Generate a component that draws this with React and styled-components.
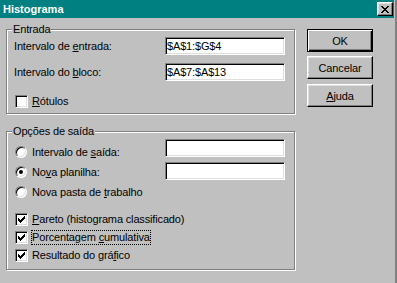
import React from 'react';
import styled, { createGlobalStyle, css } from 'styled-components';

const Global = createGlobalStyle`
  html, body { margin: 0; padding: 0; background: #c0c0c0; }
  * { box-sizing: border-box; }
  body {
    font-family: "Liberation Sans", Arial, sans-serif;
    font-size: 11px;
    letter-spacing: -0.15px;
    color: #000;
  }
`;

const Window = styled.div`
  width: 397px;
  height: 283px;
  background: #c0c0c0;
  border-right: 2px solid #808080;
  padding-right: 1px;
  display: flex;
  flex-direction: column;
  overflow: hidden;
`;

const TitleBar = styled.div`
  height: 18px;
  background: #008080;
  color: #fff;
  font-weight: bold;
  letter-spacing: 0;
  display: flex;
  align-items: center;
  justify-content: space-between;
  padding: 0 1px 0 3px;
  flex-shrink: 0;
`;

const CloseBtn = styled.div`
  width: 16px;
  height: 14px;
  background: #c0c0c0;
  border: 1px solid;
  border-color: #fff #000 #000 #fff;
  box-shadow: inset -1px -1px #808080, inset 1px 1px #dfdfdf;
  display: flex;
  align-items: center;
  justify-content: center;
`;

const Body = styled.div`
  display: flex;
  align-items: flex-start;
  padding: 11px 0 0 6px;
`;

const LeftCol = styled.div`
  width: 289px;
  display: flex;
  flex-direction: column;
  gap: 17px;
`;

const Group = styled.div`
  position: relative;
  border: 1px solid #808080;
  box-shadow: inset 1px 1px #fff, 1px 1px #fff;
  padding: ${p => p.$pad};
  display: flex;
  flex-direction: column;
`;

const Legend = styled.span`
  position: absolute;
  top: -7px;
  left: 5px;
  padding: 0 1px;
  line-height: 13px;
  background: #c0c0c0;
`;

const Row = styled.div`
  height: ${p => p.$h}px;
  margin-top: ${p => p.$mt || 0}px;
  display: flex;
  align-items: center;
  padding-left: ${p => p.$pl || 0}px;
`;

const Label = styled.span`
  flex: 1;
  line-height: 13px;
  white-space: nowrap;
`;

const Field = styled.input`
  width: 120px;
  height: 18px;
  background: #fff;
  border: 1px solid;
  border-color: #808080 #fff #fff #808080;
  box-shadow: inset 1px 1px #000, inset -1px -1px #dfdfdf;
  padding: 0 1px;
  margin: 0;
  font: inherit;
  letter-spacing: inherit;
  color: #000;
  outline: none;
  ${p => p.$top !== undefined && css`
    align-self: flex-start;
    margin-top: ${p.$top}px;
  `}
`;

const Box = styled.span`
  width: 13px;
  height: 13px;
  flex-shrink: 0;
  background: #fff;
  border: 1px solid;
  border-color: #808080 #fff #fff #808080;
  box-shadow: inset 1px 1px #000, inset -1px -1px #dfdfdf;
  display: flex;
  align-items: center;
  justify-content: center;
  margin-right: 4px;
`;

const Radio = styled.span`
  width: 12px;
  height: 12px;
  flex-shrink: 0;
  border-radius: 50%;
  background: #fff;
  border: 1px solid;
  border-color: #808080 #fff #fff #808080;
  box-shadow: inset 1px 1px #000, inset -1px -1px #dfdfdf;
  margin: 0 5px 0 1px;
  display: flex;
  align-items: center;
  justify-content: center;
  &::after {
    content: '';
    width: 4px;
    height: 4px;
    border-radius: 50%;
    background: ${p => (p.$on ? '#000' : 'transparent')};
  }
`;

const Text = styled.span`
  line-height: 13px;
  white-space: nowrap;
  ${p => p.$focus && css`
    outline: 1px dotted #000;
    outline-offset: 0;
  `}
`;

const U = styled.u`
  text-decoration: underline;
  text-underline-offset: 1px;
`;

const ButtonCol = styled.div`
  margin-left: 12px;
  display: flex;
  flex-direction: column;
`;

const Button = styled.button`
  width: 66px;
  height: 23px;
  margin: ${p => p.$mt || 0}px 0 0 0;
  padding: 0;
  font: inherit;
  letter-spacing: inherit;
  color: #000;
  background: #c0c0c0;
  border: 1px solid;
  border-color: #fff #000 #000 #fff;
  box-shadow: inset -1px -1px #808080, inset 1px 1px #dfdfdf;
  ${p => p.$default && css`
    border: 1px solid #000;
    box-shadow: inset 1px 1px #fff, inset -1px -1px #000, inset -2px -2px #808080;
  `}
`;

const PixelGlyph = ({ rows, w, h }) => (
  <svg width={w} height={h} viewBox={`0 0 ${w} ${h}`} shapeRendering="crispEdges">
    {rows.flatMap((r, y) =>
      r.split('').map((c, x) =>
        c === '1' ? <rect key={`${x}-${y}`} x={x} y={y} width="1" height="1" fill="#000" /> : null
      )
    )}
  </svg>
);

const CLOSE = [
  '11....11',
  '.11..11.',
  '..1111..',
  '...11...',
  '..1111..',
  '.11..11.',
  '11....11',
];

const CHECK = [
  '......1',
  '.....11',
  '1...111',
  '11.111.',
  '11111..',
  '.111...',
  '..1....',
];

const CheckRow = ({ checked, children, focus, mt }) => (
  <Row $h={18} $pl={1} $mt={mt}>
    <Box>{checked && <PixelGlyph rows={CHECK} w={7} h={7} />}</Box>
    <Text $focus={focus}>{children}</Text>
  </Row>
);

const RadioRow = ({ on, children, fieldTop }) => (
  <Row $h={20}>
    <Radio $on={on} />
    <Label>{children}</Label>
    {fieldTop !== undefined && <Field readOnly value="" $top={fieldTop} />}
  </Row>
);

export default function App() {
  return (
    <>
      <Global />
      <Window>
        <TitleBar>
          <span>Histograma</span>
          <CloseBtn><PixelGlyph rows={CLOSE} w={8} h={7} /></CloseBtn>
        </TitleBar>
        <Body>
          <LeftCol>
            <Group $pad="7px 9px 3px 7px">
              <Legend>Entrada</Legend>
              <Row $h={18}>
                <Label>Intervalo de <U>e</U>ntrada:</Label>
                <Field readOnly value="$A$1:$G$4" />
              </Row>
              <Row $h={18} $mt={8}>
                <Label>Intervalo do <U>b</U>loco:</Label>
                <Field readOnly value="$A$7:$A$13" />
              </Row>
              <CheckRow mt={11}><U>R</U>ótulos</CheckRow>
            </Group>
            <Group $pad="10px 9px 5px 7px">
              <Legend>Opções de saída</Legend>
              <RadioRow fieldTop={-3}>Intervalo de <U>s</U>aída:</RadioRow>
              <RadioRow on fieldTop={0}>No<U>v</U>a planilha:</RadioRow>
              <RadioRow>Nova pasta de <U>t</U>rabalho</RadioRow>
              <CheckRow checked mt={8}><U>P</U>areto (histograma classificado)</CheckRow>
              <CheckRow checked focus>Porcentagem <U>c</U>umulativa</CheckRow>
              <CheckRow checked>Resultado do grá<U>f</U>ico</CheckRow>
            </Group>
          </LeftCol>
          <ButtonCol>
            <Button $default>OK</Button>
            <Button $mt={4}>Cancelar</Button>
            <Button $mt={5}><U>A</U>juda</Button>
          </ButtonCol>
        </Body>
      </Window>
    </>
  );
}
